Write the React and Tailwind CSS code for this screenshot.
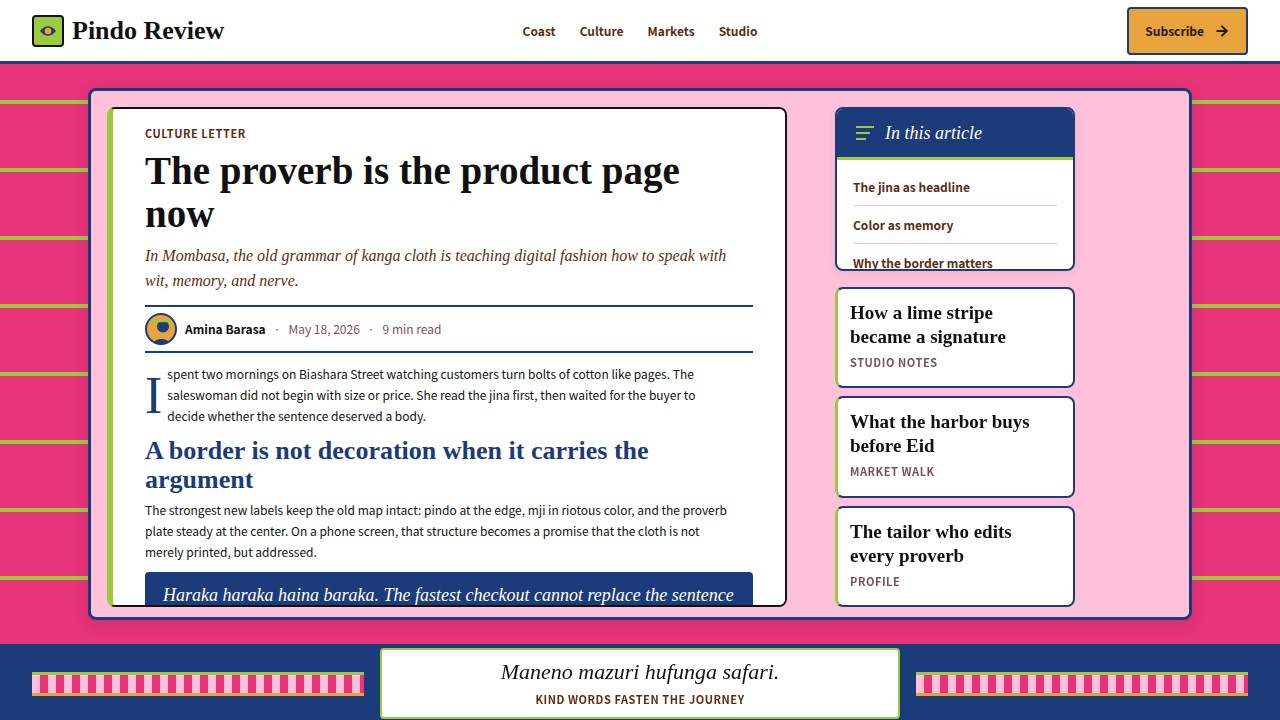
import React from "react";
import { ArrowRight } from "lucide-react";

const navItems = ["Coast", "Culture", "Markets", "Studio"];

const tocItems = [
  "The jina as headline",
  "Color as memory",
  "Why the border matters",
];

const related = [
  { title: "How a lime stripe became a signature", tag: "Studio notes" },
  { title: "What the harbor buys before Eid", tag: "Market walk" },
  { title: "The tailor who edits every proverb", tag: "Profile" },
];

function Logo() {
  return (
    <a href="#" className="flex items-center gap-2 justify-self-start">
      <span className="flex size-8 items-center justify-center rounded border-2 border-[#111] bg-[#9dc93c]">
        <svg width="16" height="10" viewBox="0 0 16 10" aria-hidden="true">
          <path d="M0 5C3 1.400 5.500 .2 8 .2S13 1.400 16 5C13 8.600 10.500 9.800 8 9.800S3 8.600 0 5Z" fill="#1c3b7a" />
          <circle cx="8" cy="5" r="3.300" fill="#e8a33d" />
        </svg>
      </span>
      <span className="font-['Liberation_Serif',serif] text-[26px] leading-8 font-bold text-[#111]">
        Pindo Review
      </span>
    </a>
  );
}

function Avatar() {
  return (
    <svg width="32" height="32" viewBox="0 0 32 32" aria-hidden="true">
      <clipPath id="avatar-clip">
        <circle cx="16" cy="16" r="15.500" />
      </clipPath>
      <g clipPath="url(#avatar-clip)">
        <circle cx="16" cy="16" r="15" fill="#e8a33d" />
        <circle cx="18" cy="13.500" r="6" fill="#1c3b7a" />
        <path d="M3 6.500h26v2.700h-26Z" fill="#9dc93c" />
        <path d="M11 4h14v2.500h-14Z" fill="#e8a33d" />
        <ellipse cx="16.500" cy="30" rx="7.500" ry="4" fill="#1c3b7a" />
      </g>
      <circle cx="16" cy="16" r="15" fill="none" stroke="#1c3b7a" strokeWidth="2" />
    </svg>
  );
}

function Article() {
  return (
    <article className="min-h-0 w-full max-w-[680px] overflow-y-auto rounded-lg border-2 border-l-[6px] border-[#111] border-l-[#9dc93c] bg-white px-8 py-4 [scrollbar-width:none]">
      <p className="text-[11px] leading-4 font-bold tracking-wider text-[#5a2d12] uppercase">
        Culture letter
      </p>
      <h1 className="mt-2 font-['Liberation_Serif',serif] text-[39px] leading-[43px] font-bold text-[#111]">
        The proverb is the product page now
      </h1>
      <p className="mt-2 font-['Liberation_Serif',serif] text-base leading-[25px] text-[#5a2d12] italic">
        In Mombasa, the old grammar of kanga cloth is teaching digital fashion how to speak with
        <br />
        wit, memory, and nerve.
      </p>
      <div className="mt-3 flex h-12 items-center gap-2 border-y-2 border-[#1c3b7a] text-xs text-[#7a5060]">
        <Avatar />
        <span className="font-bold text-[#111]">Amina Barasa</span>
        <span>·</span>
        <time dateTime="2026-05-18">May 18, 2026</time>
        <span>·</span>
        <span>9 min read</span>
      </div>
      <p className="mt-[10px] text-xs leading-[21px] first-letter:float-left first-letter:pt-3 first-letter:pr-[5px] first-letter:font-['Liberation_Serif',serif] first-letter:text-[52px] first-letter:leading-[42px] first-letter:text-[#1c3b7a]">
        I spent two mornings on Biashara Street watching customers turn bolts of cotton like pages. The
        <br />
        saleswoman did not begin with size or price. She read the jina first, then waited for the buyer to
        <br />
        decide whether the sentence deserved a body.
      </p>
      <h2 className="mt-[10px] font-['Liberation_Serif',serif] text-[26px] leading-[29px] font-bold text-[#1c3b7a]">
        A border is not decoration when it carries the argument
      </h2>
      <p className="mt-[5px] text-xs leading-[21px]">
        The strongest new labels keep the old map intact: pindo at the edge, mji in riotous color, and the proverb
        <br />
        plate steady at the center. On a phone screen, that structure becomes a promise that the cloth is not
        <br />
        merely printed, but addressed.
      </p>
      <blockquote className="mt-[10px] rounded bg-[#1c3b7a] px-[18px] py-[9px] font-['Liberation_Serif',serif] text-lg leading-7 text-white italic">
        Haraka haraka haina baraka. The fastest checkout cannot replace the sentence
      </blockquote>
    </article>
  );
}

function Sidebar() {
  return (
    <aside className="flex min-h-0 w-60 shrink-0 flex-col gap-4">
      <nav
        aria-labelledby="toc-title"
        className="h-[164px] shrink-0 overflow-hidden rounded-lg border-2 border-[#1c3b7a] bg-white shadow-[0_2px_8px_rgba(0,0,0,0.08)]"
      >
        <div className="flex items-center gap-2 border-b-[3px] border-[#9dc93c] bg-[#1c3b7a] px-4 py-3">
          <svg width="24" height="24" viewBox="0 0 24 24" fill="none" stroke="#9dc93c" strokeWidth="2" aria-hidden="true">
            <path d="M3 6h18M3 12h14M3 18h10" />
          </svg>
          <h2
            id="toc-title"
            className="font-['Liberation_Serif',serif] text-lg leading-6 text-white italic"
          >
            In this article
          </h2>
        </div>
        <ul className="px-4 py-2">
          {tocItems.map((item) => (
            <li key={item} className="border-b border-[#ffc1d9]">
              <a href="#" className="block py-2 text-xs leading-[21px] font-bold text-[#5a2d12]">
                {item}
              </a>
            </li>
          ))}
        </ul>
      </nav>
      <div className="flex flex-1 flex-col gap-2">
        {related.map(({ title, tag }) => (
          <a
            key={tag}
            href="#"
            className="flex flex-1 flex-col gap-[5px] rounded-lg border-2 border-l-[3px] border-[#1c3b7a] border-l-[#9dc93c] bg-white py-3 pr-8 pl-3"
          >
            <h3 className="font-['Liberation_Serif',serif] text-[19px] leading-6 font-bold text-[#111]">
              {title}
            </h3>
            <p className="text-[11px] leading-4 font-bold tracking-wider text-[#7a5060] uppercase">
              {tag}
            </p>
          </a>
        ))}
      </div>
    </aside>
  );
}

function Band() {
  return (
    <div className="h-6 flex-1 border-t-[3px] border-b-[3px] border-t-[#9dc93c] border-b-[#e8a33d] bg-[repeating-linear-gradient(90deg,#ffc1d9_0_8px,#e6337a_8px_16px)]" />
  );
}

export default function App() {
  return (
    <div className="flex h-screen flex-col font-['Noto_Sans_CJK_JP',sans-serif] text-[#111]">
      <header className="grid h-16 shrink-0 grid-cols-[1fr_auto_1fr] items-center border-b-[3px] border-[#1c3b7a] bg-white px-8">
        <Logo />
        <nav className="flex gap-6">
          {navItems.map((item) => (
            <a key={item} href="#" className="text-xs font-bold text-[#5a2d12]">
              {item}
            </a>
          ))}
        </nav>
        <button
          type="button"
          className="flex h-12 items-center gap-[10px] justify-self-end rounded border-2 border-[#1c3b7a] bg-[#e8a33d] px-4 text-xs font-bold text-[#2b1608]"
        >
          Subscribe
          <ArrowRight size={16} strokeWidth={3} />
        </button>
      </header>

      <main className="flex min-h-0 flex-1 bg-[repeating-linear-gradient(180deg,#e6337a_0_36px,#9dc93c_36px_40px,#e6337a_40px_68px)] px-[88px] py-6">
        <div className="flex min-w-0 flex-1 gap-12 rounded-lg border-[3px] border-[#1c3b7a] bg-[#ffc1d9] px-4 pt-4 pb-[10px] shadow-[0_4px_16px_rgba(0,0,0,0.1)]">
          <Article />
          <Sidebar />
        </div>
      </main>

      <footer className="flex shrink-0 items-center gap-4 border-t-[3px] border-[#1c3b7a] bg-[#1c3b7a] px-8 py-px">
        <Band />
        <div className="flex w-full max-w-[520px] flex-col items-center gap-[5px] rounded border-2 border-[#9dc93c] bg-white pt-2 pb-[10px]">
          <p className="font-['Liberation_Serif',serif] text-[22px] leading-7 italic">
            Maneno mazuri hufunga safari.
          </p>
          <p className="text-[11px] leading-4 font-bold tracking-wider text-[#5a2d12] uppercase">
            Kind words fasten the journey
          </p>
        </div>
        <Band />
      </footer>
    </div>
  );
}
